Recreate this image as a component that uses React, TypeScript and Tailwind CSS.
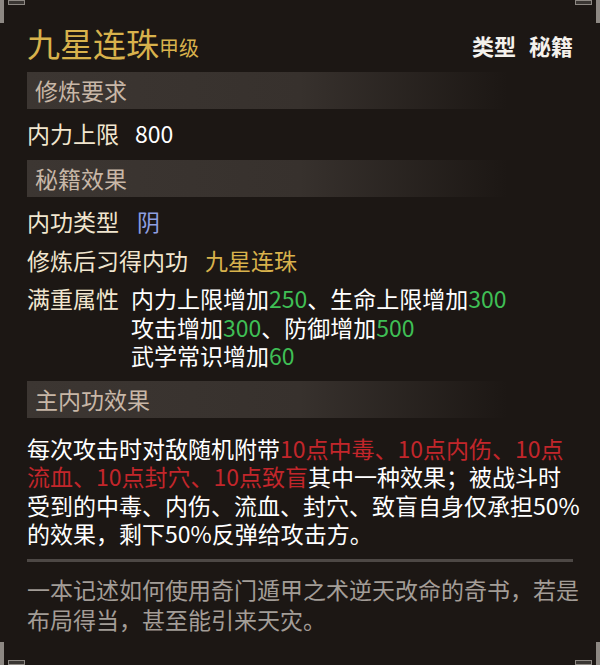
import React from "react";

const FONT = { fontFamily: '"Noto Sans CJK SC", "Noto Sans", sans-serif' };

function Corner({ pos }: { pos: "tl" | "tr" | "bl" | "br" }) {
  const base = "absolute w-[26px] h-[23px] pointer-events-none";
  const place =
    pos === "tl"
      ? "left-0 top-0"
      : pos === "tr"
      ? "right-0 top-0 -scale-x-100"
      : pos === "bl"
      ? "left-0 bottom-0 -scale-y-100"
      : "right-0 bottom-0 -scale-x-100 -scale-y-100";
  return (
    <svg className={`${base} ${place}`} viewBox="0 0 26 23">
      <rect x="0" y="0" width="4" height="23" fill="#8d8883" />
      <rect x="8.5" y="0.5" width="16" height="4" fill="#3a3633" stroke="#8d8883" strokeWidth="1" />
    </svg>
  );
}

function SectionBar({ children }: { children: React.ReactNode }) {
  return (
    <div className="h-[37px] flex items-center pl-[8px] bg-[linear-gradient(90deg,#3c3632_0%,#37312d_50%,rgba(40,35,31,0)_88%)] text-[23px] text-[#c8b7a7] leading-none">
      {children}
    </div>
  );
}

const G = ({ children }: { children: React.ReactNode }) => (
  <span className="text-[#3fbf55]">{children}</span>
);
const R = ({ children }: { children: React.ReactNode }) => (
  <span className="text-[#c2262b]">{children}</span>
);

export default function App() {
  return (
    <div
      style={FONT}
      className="relative w-[600px] h-[665px] overflow-hidden bg-[#1c1714] px-[27px] pt-[22px] flex flex-col"
    >
      <Corner pos="tl" />
      <Corner pos="tr" />
      <Corner pos="bl" />
      <Corner pos="br" />

      <div className="h-[42px] flex items-center justify-between">
        <div className="flex items-end">
          <span className="text-[33px] leading-[42px] text-[#d8b24c]">九星连珠</span>
          <span className="text-[20px] leading-[32px] text-[#d8b24c]">甲级</span>
        </div>
        <div className="flex gap-[13px] text-[22px] font-bold text-[#f4f1ec] pt-[4px]">
          <span>类型</span>
          <span>秘籍</span>
        </div>
      </div>

      <div className="mt-[8px]">
        <SectionBar>修炼要求</SectionBar>
      </div>

      <div className="mt-[8px] h-[32px] flex items-center text-[23px] whitespace-nowrap">
        <span className="text-[#f1e6cf]">内力上限</span>
        <span className="ml-[16px] text-white">800</span>
      </div>

      <div className="mt-[11px]">
        <SectionBar>秘籍效果</SectionBar>
      </div>

      <div className="mt-[8px] h-[32px] flex items-center text-[23px] whitespace-nowrap">
        <span className="text-[#f1e6cf]">内功类型</span>
        <span className="ml-[18px] text-[#8f9fe0]">阴</span>
      </div>

      <div className="mt-[7px] h-[32px] flex items-center text-[23px] whitespace-nowrap">
        <span className="text-[#f1e6cf]">修炼后习得内功</span>
        <span className="ml-[17px] text-[#d8b24c]">九星连珠</span>
      </div>

      <div className="mt-[8px] flex text-[23px] leading-[28.5px] whitespace-nowrap">
        <span className="text-[#f1e6cf] w-[104px] shrink-0">满重属性</span>
        <div className="text-white">
          <div>
            内力上限增加<G>250</G>、生命上限增加<G>300</G>
          </div>
          <div>
            攻击增加<G>300</G>、防御增加<G>500</G>
          </div>
          <div>
            武学常识增加<G>60</G>
          </div>
        </div>
      </div>

      <div className="mt-[11px]">
        <SectionBar>主内功效果</SectionBar>
      </div>

      <div className="mt-[16px] text-[23px] leading-[28.5px] text-white whitespace-nowrap">
        <div>
          每次攻击时对敌随机附带<R>10点中毒、10点内伤、10点</R>
        </div>
        <div>
          <R>流血、10点封穴、10点致盲</R>其中一种效果；被战斗时
        </div>
        <div>受到的中毒、内伤、流血、封穴、致盲自身仅承担50%</div>
        <div>的效果，剩下50%反弹给攻击方。</div>
      </div>

      <div className="mt-[11px] h-[3px] bg-[#4d4845]" />

      <div className="mt-[12px] text-[23px] leading-[30px] text-[#a39d97] whitespace-nowrap">
        <div>一本记述如何使用奇门遁甲之术逆天改命的奇书，若是</div>
        <div>布局得当，甚至能引来天灾。</div>
      </div>
    </div>
  );
}
